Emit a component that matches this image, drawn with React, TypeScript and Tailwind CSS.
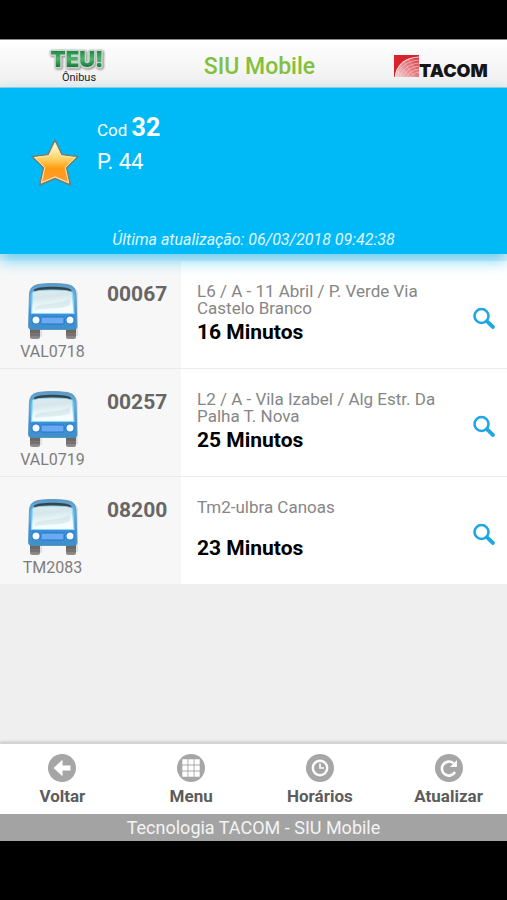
import type { ReactNode } from "react";

interface Arrival {
  line: string;
  vehicle: string;
  route: string;
  minutes: number;
}

const arrivals: Arrival[] = [
  { line: "00067", vehicle: "VAL0718", route: "L6 / A - 11 Abril / P. Verde Via Castelo Branco", minutes: 16 },
  { line: "00257", vehicle: "VAL0719", route: "L2 / A - Vila Izabel / Alg Estr. Da Palha T. Nova", minutes: 25 },
  { line: "08200", vehicle: "TM2083", route: "Tm2-ulbra Canoas", minutes: 23 },
];

function TeuLogo() {
  return (
    <div className="flex w-[60px] flex-col items-center">
      <svg viewBox="0 0 60 28" className="h-7 w-[60px] overflow-visible drop-shadow-[1px_1px_1px_rgba(0,0,0,0.45)]" role="img" aria-label="TEU!">
        <defs>
          <linearGradient id="teu" x1="0" y1="0" x2="0" y2="1">
            <stop offset="0.2" stopColor="#1f8a48" />
            <stop offset="0.5" stopColor="#4fb56b" />
            <stop offset="0.8" stopColor="#177a3c" />
          </linearGradient>
        </defs>
        <text
          x="28"
          y="23"
          fontFamily="Inter, sans-serif"
          fontWeight="900"
          fontSize="22"
          textAnchor="middle"
          fill="url(#teu)"
          stroke="#ccd3cd"
          strokeWidth="3"
          strokeLinejoin="round"
          paintOrder="stroke"
        >
          TEU!
        </text>
      </svg>
      <span className="text-[11px] leading-3 text-[#222222]">Ônibus</span>
    </div>
  );
}

function TacomLogo() {
  return (
    <svg viewBox="0 0 94 26" className="h-[26px] w-[94px] overflow-visible" role="img" aria-label="TACOM">
      <defs>
        <clipPath id="tacomBox">
          <rect x="0" y="1" width="25" height="22" />
        </clipPath>
        <linearGradient id="tacomFade" x1="0" y1="1" x2="1" y2="0">
          <stop offset="0" stopColor="#f7e4e5" />
          <stop offset="0.5" stopColor="#e88388" />
          <stop offset="1" stopColor="#d8323b" />
        </linearGradient>
      </defs>
      <g clipPath="url(#tacomBox)">
        <rect x="0" y="1" width="25" height="22" fill="#d8222c" />
        <path d="M1 26C1 12 9 4 25 2V26Z" fill="url(#tacomFade)" />
        <g fill="none" stroke="#f8d3d5">
          <path d="M1 25C2 12 10 4 25 3" strokeWidth="1.2" />
          <path d="M3 25C4 14 12 7 25 6" strokeWidth="0.6" />
          <path d="M6 25C7 16 14 10 25 9" strokeWidth="0.6" />
          <path d="M9 25C10 18 16 13 25 12" strokeWidth="0.6" />
          <path d="M12 25C13 20 18 16 25 15" strokeWidth="0.6" />
          <path d="M15 25C16 22 20 19 25 18" strokeWidth="0.6" />
          <path d="M2 16L12 25M5 11L18 25M9 7L22 25M14 5L25 20" strokeWidth="0.4" />
        </g>
      </g>
      <text
        x="25"
        y="23"
        fontFamily="Inter, sans-serif"
        fontWeight="900"
        fontSize="18"
        fill="#161616"
      >
        TACOM
      </text>
    </svg>
  );
}

function StarIcon() {
  return (
    <svg viewBox="0 0 48 48" className="h-12 w-12" aria-hidden="true">
      <defs>
        <linearGradient id="star" x1="0" y1="0" x2="0" y2="1">
          <stop offset="0.05" stopColor="#fffbe0" />
          <stop offset="0.4" stopColor="#ffd164" />
          <stop offset="0.65" stopColor="#ff9a10" />
          <stop offset="1" stopColor="#ff9d3c" />
        </linearGradient>
      </defs>
      <path
        d="M24 1L31 15.500L47 17.500L35.400 28.800L39.400 46L24 39.500L8.600 46L12.600 28.800L1 17.500L17 15.500Z"
        fill="#f9d9a0"
        stroke="#6f7f72"
        strokeWidth="1.6"
        strokeLinejoin="round"
      />
      <path
        d="M24 4L30 16.800L44.200 18.700L34.200 28.500L37.600 43.700L24 37.800L10.400 43.700L13.800 28.500L3.800 18.700L18 16.800Z"
        fill="url(#star)"
        stroke="#ffe2a6"
        strokeWidth="1"
      />
    </svg>
  );
}

function BusIcon() {
  return (
    <svg viewBox="1 1 54 60" className="h-[60px] w-[54px]" aria-hidden="true">
      <defs>
        <linearGradient id="busBody" x1="0" y1="0" x2="0" y2="1">
          <stop offset="0" stopColor="#5c9ac6" />
          <stop offset="0.3" stopColor="#62b4e6" />
          <stop offset="0.7" stopColor="#3f90d6" />
          <stop offset="1" stopColor="#3f90cb" />
        </linearGradient>
        <linearGradient id="busGlass" x1="0" y1="0" x2="0.2" y2="1">
          <stop offset="0" stopColor="#dfecef" />
          <stop offset="0.35" stopColor="#d6e6ea" />
          <stop offset="0.7" stopColor="#ecf9fa" />
          <stop offset="1" stopColor="#f6ffff" />
        </linearGradient>
        <linearGradient id="busTyre" x1="0" y1="0" x2="0" y2="1">
          <stop offset="0" stopColor="#5a5856" />
          <stop offset="1" stopColor="#93908d" />
        </linearGradient>
      </defs>
      <path d="M5 55V13C5 6 12 5 28 5S53 6 53 13V55H41V49H17V56H5Z" fill="#000" opacity="0.09" />
      <rect x="5" y="46" width="10" height="12" rx="2" fill="url(#busTyre)" />
      <rect x="41" y="46" width="10" height="12" rx="2" fill="url(#busTyre)" />
      <path d="M5 51h10M5 54h10M41 51h10M41 54h10" stroke="#625d5a" strokeWidth="0.7" />
      <path
        d="M3.500 45L4.500 13C5 6 9 4 15 3.200C22 2.300 33 2.300 40 3.200C47 4 50.500 6 51 13L52 45C52 47.500 51 48.500 49 48.500H6.500C4.500 48.500 3.500 47.500 3.500 45Z"
        fill="url(#busBody)"
        stroke="#4e8fbc"
        strokeWidth="0.8"
      />
      <path d="M9 9C10 4.500 45 4.500 46 9L47 11C38 8.500 18 8.500 9 11Z" fill="#36444e" />
      <path
        d="M6.500 32.500L7.500 12C8 8 47 8 47.500 12L49 32.500Z"
        fill="url(#busGlass)"
        stroke="#8fdaf3"
        strokeWidth="1.2"
      />
      <path d="M10 26C20 21 28 25 45 18V24C33 29 24 26 10 29Z" fill="#b9d2da" opacity="0.35" />
      <path d="M4.500 33.500H51.500V36H4.500Z" fill="#3c8fd6" />
      <rect x="16" y="36" width="23" height="7" rx="1.500" fill="#6aaaf0" stroke="#2474d2" strokeWidth="1" />
      <circle cx="11" cy="39" r="4.500" fill="#2777cc" />
      <circle cx="45" cy="39" r="4.500" fill="#2777cc" />
      <circle cx="11" cy="39" r="3.500" fill="#f4fcff" />
      <circle cx="45" cy="39" r="3.500" fill="#f4fcff" />
    </svg>
  );
}

function SearchIcon() {
  return (
    <svg viewBox="0 0 24 24" className="h-6 w-6" fill="none" stroke="#1ea7e1" aria-hidden="true">
      <circle cx="9.500" cy="9" r="7" strokeWidth="2.600" />
      <path d="M14.800 14.200L21 20" strokeWidth="3.800" strokeLinecap="round" />
    </svg>
  );
}

function Disc({ children }: { children: ReactNode }) {
  return (
    <svg viewBox="0 0 28 28" className="h-7 w-7" aria-hidden="true">
      <circle cx="14" cy="14" r="14" fill="#a6a6a6" />
      {children}
    </svg>
  );
}

function ArrivalRow({ arrival }: { arrival: Arrival }) {
  return (
    <li className="flex h-[108px] border-b border-[#ebebeb] bg-white last:h-[107px] last:border-b-0">
      <div className="flex w-[181px] shrink-0 bg-[#f7f7f7]">
        <div className="flex w-[105px] flex-col items-center pt-[21px]">
          <BusIcon />
          <span className="text-base leading-5 text-[#7d7d7d]">{arrival.vehicle}</span>
        </div>
        <strong className="pt-5 pl-[2px] text-[21px] leading-[26px] font-bold text-[#666666]">{arrival.line}</strong>
      </div>
      <div className="min-w-0 flex-1 pt-[22px] pl-4">
        <p className="h-[34px] max-w-[256px] text-[17px] leading-[17px] text-[#868686]">{arrival.route}</p>
        <p className="pt-[3px] text-[21px] leading-6 font-bold text-black">{arrival.minutes} Minutos</p>
      </div>
      <button type="button" aria-label={`Buscar ${arrival.line}`} className="mr-[11px] self-center pt-2">
        <SearchIcon />
      </button>
    </li>
  );
}

function NavButton({ label, children }: { label: string; children: ReactNode }) {
  return (
    <button type="button" className="flex flex-col items-center pt-[10px] text-[17px] leading-7 font-bold text-[#5c5c5c]">
      <Disc>{children}</Disc>
      {label}
    </button>
  );
}

export default function App() {
  return (
    <div className="flex min-h-screen flex-col overflow-hidden bg-black pt-[39px] pb-[59px] font-[Roboto,sans-serif]">
      <header className="grid h-[49px] grid-cols-3 items-center border-t border-b border-t-[#8a8a8a] border-b-[#a9cbd8] bg-linear-to-b from-white to-[#efefef]">
        <div className="pl-[49px]">
          <TeuLogo />
        </div>
        <h1 className="pt-[6px] pl-3 text-center text-[23px] leading-7 font-medium whitespace-nowrap text-[#83c03c]">SIU Mobile</h1>
        <div className="flex justify-end pt-[6px] pr-[19px]">
          <TacomLogo />
        </div>
      </header>

      <section className="relative z-10 flex h-[166px] flex-col bg-[#00b9f7] text-white shadow-[0_6px_14px_rgba(0,185,247,0.6)]">
        <div className="flex flex-1">
          <button type="button" aria-label="Favorito" className="ml-[31px] self-start pt-[51px]">
            <StarIcon />
          </button>
          <div className="pt-6 pl-[18px]">
            <p className="text-[17px] leading-8">
              Cod <strong className="text-[25px] leading-8 font-bold">32</strong>
            </p>
            <p className="text-[22px] leading-8">P. 44</p>
          </div>
        </div>
        <p className="pb-1 text-center text-base leading-5 text-[#e0f7ff] italic">
          Última atualização: 06/03/2018 09:42:38
        </p>
      </section>

      <main className="flex-1 bg-[#efefef] pt-[7px]">
        <ul>
          {arrivals.map((arrival) => (
            <ArrivalRow key={arrival.line} arrival={arrival} />
          ))}
        </ul>
      </main>

      <nav className="h-[71px] border-t border-[#d5d5d5] bg-white shadow-[0_-1px_3px_rgba(0,0,0,0.2)]">
        <div className="-mr-[6px] -ml-[2px] grid grid-cols-4">
          <NavButton label="Voltar">
            <path d="M5.500 14L14.500 5.800V11.500H22.500V16.500H14.500V22.200Z" fill="#fff" />
          </NavButton>
          <NavButton label="Menu">
            <path
              d="M5.300 5.300h5.200v5.200H5.300zM11.400 5.300h5.200v5.200h-5.200zM17.500 5.300h5.200v5.200h-5.200zM5.300 11.400h5.200v5.200H5.300zM11.400 11.400h5.200v5.200h-5.200zM17.500 11.400h5.200v5.200h-5.200zM5.300 17.500h5.200v5.200H5.300zM11.400 17.500h5.200v5.200h-5.200zM17.500 17.500h5.200v5.200h-5.200z"
              fill="#fff"
            />
          </NavButton>
          <NavButton label="Horários">
            <circle cx="14" cy="14" r="7.200" fill="none" stroke="#fff" strokeWidth="2.400" />
            <path d="M14 9.500V14H18" fill="none" stroke="#fff" strokeWidth="1.600" />
          </NavButton>
          <NavButton label="Atualizar">
            <path d="M20 18A7 7 0 1 1 18.500 9.300" fill="none" stroke="#fff" strokeWidth="2.600" />
            <path d="M22 6V13H15Z" fill="#fff" />
          </NavButton>
        </div>
      </nav>

      <footer className="h-[27px] bg-[#a3a3a3] text-center text-lg leading-[27px] text-[#f4f4f4]">
        Tecnologia TACOM - SIU Mobile
      </footer>
    </div>
  );
}
